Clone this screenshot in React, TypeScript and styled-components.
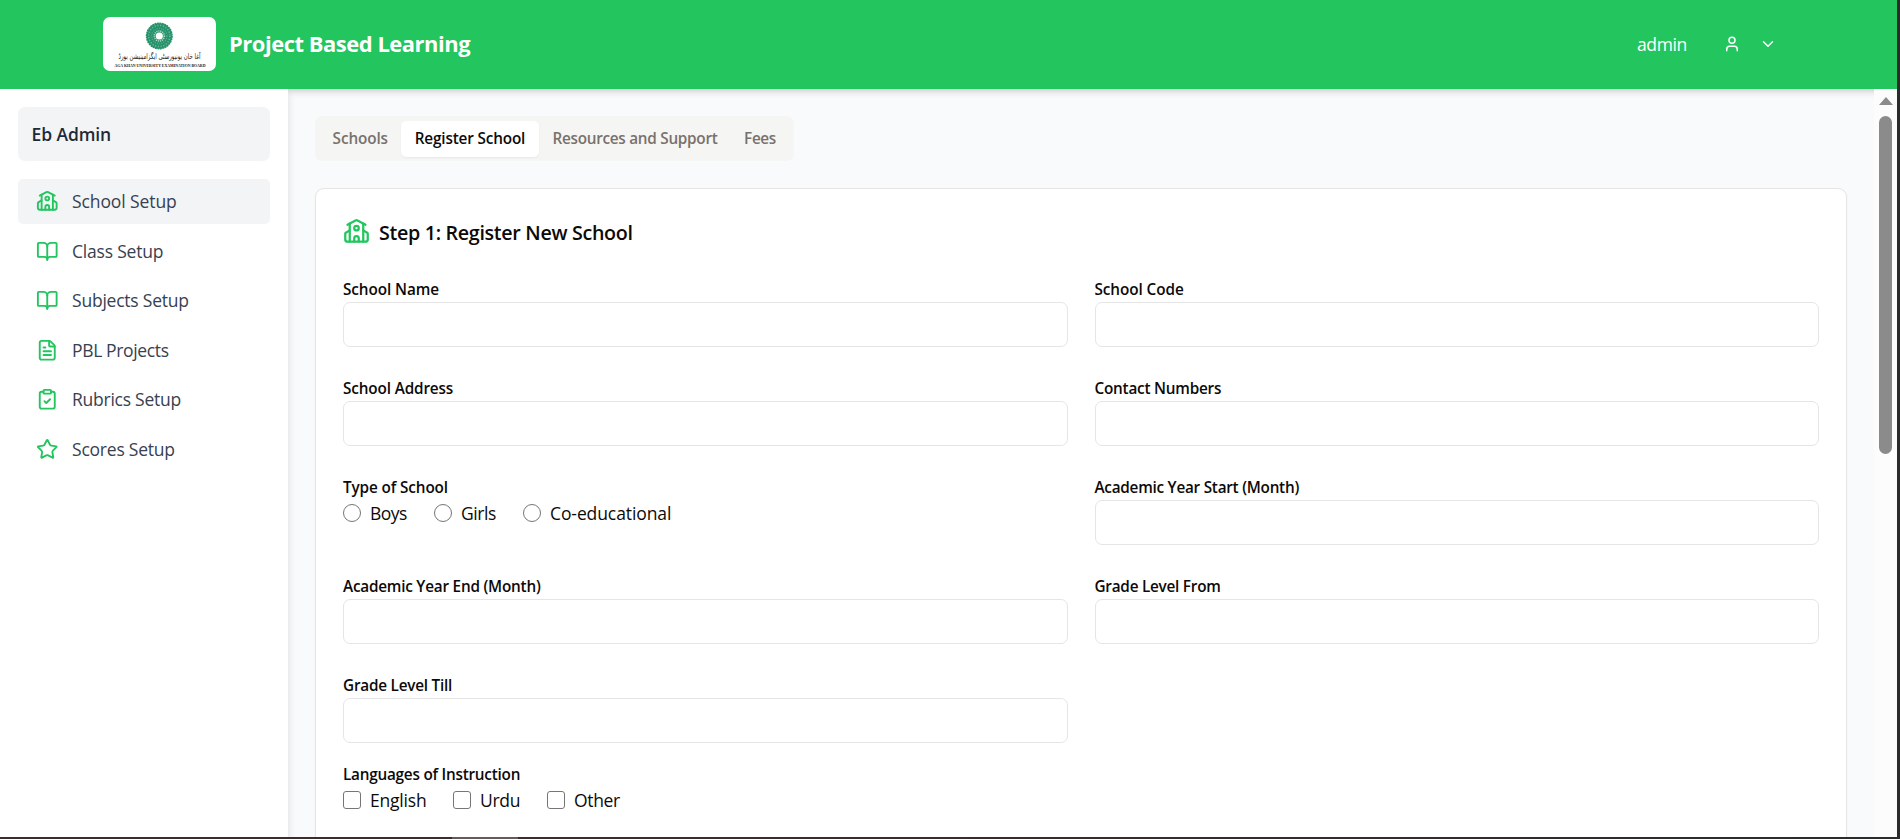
import React from "react";
import styled, { createGlobalStyle, css } from "styled-components";
import {
  BookOpen,
  ChevronDown,
  ClipboardCheck,
  FileText,
  School,
  Star,
  User,
  type LucideIcon,
} from "lucide-react";

const GlobalStyle = createGlobalStyle`
  *, *::before, *::after { box-sizing: border-box; }
  html, body { margin: 0; padding: 0; overflow: hidden; }
  body {
    font-family: "Segoe UI", "Open Sans", "Noto Sans", sans-serif;
    font-size: 17.5px;
    line-height: 27px;
    color: #0c0a09;
    background: #fff;
  }
  svg { display: block; flex: none; }
`;

type Spaced = { $ls?: number };
const spacing = css<Spaced>`
  letter-spacing: ${({ $ls = 0 }) => $ls}px;
  white-space: nowrap;
`;

const Screen = styled.div`
  width: 1900px;
  height: 839px;
  display: grid;
  grid-template-columns: 1897px 3px;
  grid-template-rows: 837px 2px;
  background: #2b2b2b;
`;

const Page = styled.div`
  display: flex;
  flex-direction: column;
  overflow: hidden;
  background: #f9fafb;
`;

const Header = styled.header`
  position: relative;
  z-index: 1;
  flex: none;
  height: 89px;
  display: flex;
  align-items: center;
  padding: 0 120px 2px 103px;
  background: #22c55e;
  color: #fff;
  box-shadow: 0 4px 7px -1px rgba(0, 0, 0, 0.14), 0 2px 4px -2px rgba(0, 0, 0, 0.12);
`;

const LogoBox = styled.div`
  width: 113px;
  height: 54px;
  border-radius: 7px;
  background: #fff;
  margin-right: 13px;
  svg { overflow: visible; }
`;

const Brand = styled.h1<Spaced>`
  margin: 0;
  flex: 1;
  font-size: 21.9px;
  font-weight: 700;
  ${spacing}
`;

const Account = styled.div`
  display: flex;
  align-items: center;
  span { ${spacing} letter-spacing: -0.35px; margin-right: 36px; padding-top: 1px; }
  svg + svg { margin-left: 18px; }
`;

const Body = styled.div`
  flex: 1;
  min-height: 0;
  display: flex;
`;

const Sidebar = styled.aside`
  position: relative;
  z-index: 2;
  flex: none;
  width: 288px;
  padding: 18px;
  background: #fff;
  box-shadow: 2px 4px 7px -1px rgba(0, 0, 0, 0.1);
  clip-path: inset(0 -12px 0 0);
`;

const RoleBox = styled.div`
  height: 54px;
  display: flex;
  align-items: center;
  padding: 0 13.5px;
  border-radius: 7px;
  background: #f3f4f6;
  color: #1f2937;
  font-weight: 600;
  letter-spacing: -0.1px;
  margin-bottom: 18px;
`;

const Nav = styled.nav`
  display: flex;
  flex-direction: column;
  gap: 4.5px;
`;

const NavItem = styled.a<Spaced & { $active?: boolean }>`
  height: 45px;
  display: flex;
  align-items: center;
  gap: 13.5px;
  padding: 0 18px;
  border-radius: 5px;
  background: ${({ $active }) => ($active ? "#f3f4f6" : "transparent")};
  color: #374151;
  ${spacing}
  svg { color: #22c55e; }
`;

const Main = styled.main`
  flex: 1;
  min-width: 0;
  overflow: hidden;
  display: flex;
  flex-direction: column;
  align-items: flex-start;
  padding: 27px 27px 0;
`;

const TabList = styled.div`
  flex: none;
  display: flex;
  align-items: center;
  height: 45px;
  padding: 0 4.5px;
  margin-bottom: 27px;
  border-radius: 7px;
  background: #f5f5f4;
`;

const Tab = styled.button<Spaced & { $width: number; $active?: boolean }>`
  width: ${({ $width }) => $width}px;
  height: 36px;
  display: flex;
  align-items: center;
  justify-content: center;
  border: 0;
  padding: 0;
  border-radius: 5px;
  font: 600 15.3px/22.5px "Segoe UI", "Open Sans", sans-serif;
  color: ${({ $active }) => ($active ? "#0c0a09" : "#78716c")};
  background: ${({ $active }) => ($active ? "#fff" : "transparent")};
  box-shadow: ${({ $active }) => ($active ? "0 1px 2px rgba(0,0,0,.06)" : "none")};
  ${spacing}
`;

const Card = styled.section`
  flex: none;
  align-self: stretch;
  height: 720px;
  padding: 26px 27px;
  border: 1px solid #e7e5e4;
  border-radius: 9px;
  background: #fff;
  box-shadow: 0 1px 2px rgba(0, 0, 0, 0.05);
`;

const CardTitle = styled.h2<Spaced>`
  display: flex;
  align-items: center;
  gap: 9px;
  height: 34px;
  margin: 0 0 26px;
  font-size: 19.7px;
  font-weight: 600;
  ${spacing}
  svg { color: #22c55e; margin-top: -1px; }
`;

const FieldGrid = styled.div`
  display: grid;
  grid-template-columns: 1fr 1fr;
  gap: 27px;
  margin-bottom: 17px;
`;

const Field = styled.div`
  display: flex;
  flex-direction: column;
`;

const Label = styled.label<Spaced>`
  height: 27px;
  font-size: 15.3px;
  font-weight: 600;
  line-height: 28px;
  ${spacing}
`;

const Input = styled.input`
  width: 100%;
  height: 45px;
  padding: 9px 13.5px;
  border: 1px solid #e5e5e5;
  border-radius: 7px;
  background: #fff;
  font: inherit;
`;

const Options = styled.div`
  display: flex;
  gap: 27px;
  height: 26px;
`;

const Option = styled.label<Spaced & { $width: number }>`
  display: flex;
  align-items: center;
  height: 26px;
  gap: 9px;
  line-height: 26px;
  span { width: ${({ $width }) => $width}px; ${spacing} }
`;

const Mark = styled.input`
  appearance: none;
  width: 18px;
  height: 18px;
  margin: 0;
  border: 1px solid #767676;
  border-radius: ${({ type }) => (type === "radio" ? "50%" : "3px")};
  background: #fff;
`;

const Scrollbar = styled.div`
  position: relative;
  z-index: 2;
  flex: none;
  width: 23px;
  display: flex;
  flex-direction: column;
  align-items: center;
  gap: 11px;
  padding-top: 8px;
  background: #fcfcfc;
`;

const ScrollArrow = styled.div`
  border: 7.5px solid transparent;
  border-top: 0;
  border-bottom: 8px solid #8b8b8b;
`;

const ScrollThumb = styled.div`
  width: 13px;
  height: 338px;
  border-radius: 7px;
  background: #8b8b8b;
`;

const BottomEdge = styled.div`
  grid-column: 1 / -1;
  display: flex;
  background: linear-gradient(90deg, #3d2b2d 40%, #2b2b2b);
  &::before {
    content: "";
    width: 66px;
    margin-left: 452px;
    background: #665a5b;
  }
`;

const Logo = () => (
  <svg width="113" height="54" viewBox="0 0 113 54">
    <circle cx="56.3" cy="19" r="12.7" fill="#26916a" />
    <circle cx="56.3" cy="19" r="12.8" fill="none" stroke="#26916a" strokeWidth="1.4" strokeDasharray="1.9 0.6" />
    <circle cx="56.3" cy="19" r="10.6" fill="none" stroke="#6cbb9d" strokeWidth="1.5" strokeDasharray="1.2 1.6" />
    <circle cx="56.3" cy="19" r="7.6" fill="none" stroke="#55ae8d" strokeWidth="1.4" strokeDasharray="1 1.2" />
    <circle cx="56.3" cy="19" r="5" fill="none" stroke="#a9dac8" strokeWidth="1.6" strokeDasharray="1.1 0.9" />
    <circle cx="56.3" cy="19" r="3.6" fill="#fff" />
    <text
      x="56.5"
      y="42"
      textAnchor="middle"
      direction="rtl"
      fontFamily="DejaVu Sans, sans-serif"
      fontSize="8"
      fill="#222"
      textLength="82"
      lengthAdjust="spacingAndGlyphs"
    >
      آغا خان یونیورسٹی ایگزامینیشن بورڈ
    </text>
    <text
      x="11.5"
      y="49.8"
      fontFamily="Liberation Serif, serif"
      fontWeight="700"
      fontSize="4.3"
      fill="#222"
      textLength="91"
      lengthAdjust="spacingAndGlyphs"
    >
      AGA KHAN UNIVERSITY EXAMINATION BOARD
    </text>
  </svg>
);

const navItems: { label: string; icon: LucideIcon; ls: number }[] = [
  { label: "School Setup", icon: School, ls: -0.1 },
  { label: "Class Setup", icon: BookOpen, ls: -0.2 },
  { label: "Subjects Setup", icon: BookOpen, ls: -0.22 },
  { label: "PBL Projects", icon: FileText, ls: -0.35 },
  { label: "Rubrics Setup", icon: ClipboardCheck, ls: -0.25 },
  { label: "Scores Setup", icon: Star, ls: -0.22 },
];

const tabs = [
  { label: "Schools", width: 81.5, ls: -0.12 },
  { label: "Register School", width: 138, ls: -0.16 },
  { label: "Resources and Support", width: 192, ls: -0.27 },
  { label: "Fees", width: 58, ls: -0.35 },
];

const TextField = ({ label, ls }: { label: string; ls?: number }) => (
  <Field>
    <Label $ls={ls}>{label}</Label>
    <Input />
  </Field>
);

type OptionItem = { label: string; width: number; ls: number };

const OptionField = ({ label, ls, type, items }: { label: string; ls?: number; type: "radio" | "checkbox"; items: OptionItem[] }) => (
  <Field>
    <Label $ls={ls}>{label}</Label>
    <Options>
      {items.map((item) => (
        <Option key={item.label} $width={item.width} $ls={item.ls}>
          <Mark type={type} name={label} />
          <span>{item.label}</span>
        </Option>
      ))}
    </Options>
  </Field>
);

const schoolTypes: OptionItem[] = [
  { label: "Boys", width: 37, ls: -0.5 },
  { label: "Girls", width: 35, ls: -0.4 },
  { label: "Co-educational", width: 122, ls: -0.1 },
];

const languages: OptionItem[] = [
  { label: "English", width: 56, ls: -0.2 },
  { label: "Urdu", width: 40, ls: -0.3 },
  { label: "Other", width: 48, ls: -0.35 },
];

export default function App() {
  return (
    <>
      <GlobalStyle />
      <Screen>
        <Page>
          <Header>
            <LogoBox>
              <Logo />
            </LogoBox>
            <Brand $ls={-0.44}>Project Based Learning</Brand>
            <Account>
              <span>admin</span>
              <User size={18} />
              <ChevronDown size={18} />
            </Account>
          </Header>
          <Body>
            <Sidebar>
              <RoleBox>Eb Admin</RoleBox>
              <Nav>
                {navItems.map(({ label, icon: Icon, ls }, i) => (
                  <NavItem key={label} $active={i === 0} $ls={ls}>
                    <Icon size={22.5} />
                    {label}
                  </NavItem>
                ))}
              </Nav>
            </Sidebar>
            <Main>
              <TabList>
                {tabs.map((tab) => (
                  <Tab key={tab.label} $width={tab.width} $ls={tab.ls} $active={tab.label === "Register School"}>
                    {tab.label}
                  </Tab>
                ))}
              </TabList>
              <Card>
                <CardTitle $ls={-0.32}>
                  <School size={27} />
                  Step 1: Register New School
                </CardTitle>
                <FieldGrid>
                  <TextField label="School Name" ls={-0.08} />
                  <TextField label="School Code" ls={-0.08} />
                  <TextField label="School Address" ls={-0.14} />
                  <TextField label="Contact Numbers" ls={-0.22} />
                  <OptionField label="Type of School" type="radio" items={schoolTypes} ls={-0.12} />
                  <TextField label="Academic Year Start (Month)" ls={-0.25} />
                  <TextField label="Academic Year End (Month)" ls={-0.22} />
                  <TextField label="Grade Level From" ls={-0.24} />
                  <TextField label="Grade Level Till" ls={-0.22} />
                </FieldGrid>
                <OptionField label="Languages of Instruction" type="checkbox" items={languages} ls={-0.23} />
              </Card>
            </Main>
            <Scrollbar>
              <ScrollArrow />
              <ScrollThumb />
            </Scrollbar>
          </Body>
        </Page>
        <div />
        <BottomEdge />
      </Screen>
    </>
  );
}
